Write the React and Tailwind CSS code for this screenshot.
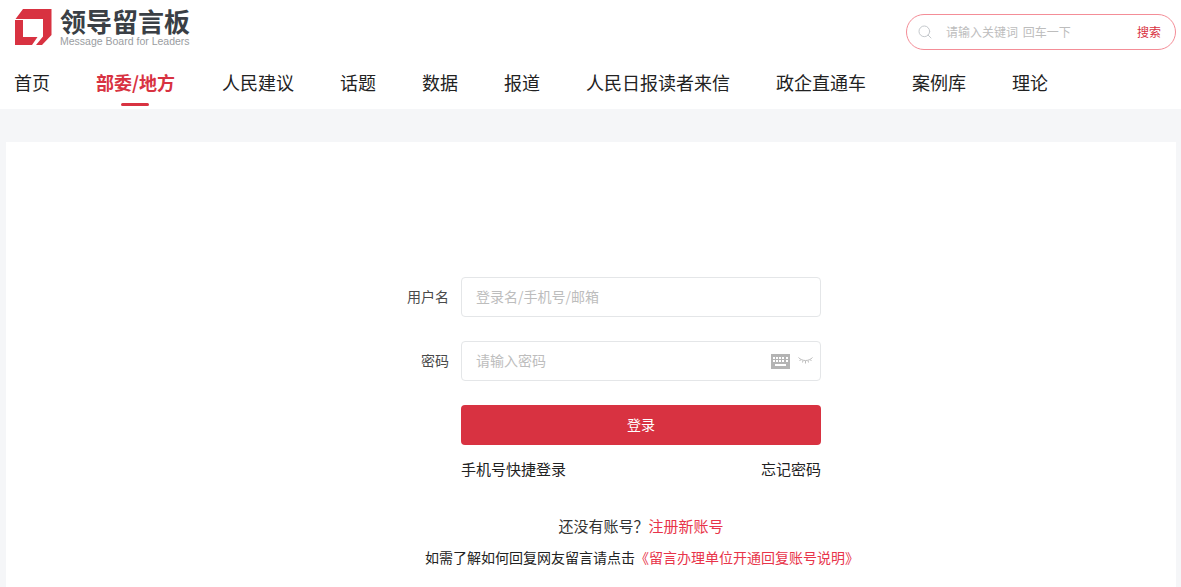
import { Search } from "lucide-react";

const navItems = ["首页", "部委/地方", "人民建议", "话题", "数据", "报道", "人民日报读者来信", "政企直通车", "案例库", "理论"];

const Logo = () => (
  <div className="flex items-start">
    <svg width="37" height="36" viewBox="0 0 37 36" className="ml-[15px] shrink-0">
      <path fill="#d83241" d="M8 0H36.5V26L27 36H21L28 27.5V10H0.5Z" />
      <path fill="#d83241" d="M0 11H8V28H22.5L17 36H0Z" />
    </svg>
    <div className="ml-[8px] -mt-[1px] flex flex-col">
      <div className="text-[26px] leading-[26px] font-bold text-[#3a3f45]">领导留言板</div>
      <div className="mt-[1px] text-[10.5px] leading-[12px] text-[#9a9da1] font-['Liberation_Sans',sans-serif]">
        Message Board for Leaders
      </div>
    </div>
  </div>
);

const SearchBox = () => (
  <div className="mr-[5px] mt-[5px] flex h-[36px] w-[270px] items-center rounded-[18px] border border-[#f48d97] pl-[10px] pr-[14px]">
    <Search size={16} strokeWidth={1.5} className="text-[#c4c8cc]" />
    <span className="ml-[13px] flex-1 text-[12px] text-[#bdbdbd] [word-spacing:2px]">请输入关键词 回车一下</span>
    <span className="text-[12px] text-[#d83241]">搜索</span>
  </div>
);

const KeyboardIcon = () => (
  <svg width="19" height="15" viewBox="0 0 19 15">
    <rect width="19" height="15" fill="#b4b4b4" />
    <g fill="#fff">
      <rect x="2" y="3" width="2" height="2" />
      <rect x="5" y="3" width="2" height="2" />
      <rect x="8" y="3" width="2" height="2" />
      <rect x="11" y="3" width="2" height="2" />
      <rect x="15" y="3" width="2" height="2" />
      <rect x="2" y="6" width="2" height="2" />
      <rect x="5" y="6" width="2" height="2" />
      <rect x="8" y="6" width="2" height="2" />
      <rect x="11" y="6" width="2" height="2" />
      <rect x="15" y="6" width="2" height="2" />
      <rect x="4" y="10" width="11" height="2" />
    </g>
  </svg>
);

const EyeClosedIcon = () => (
  <svg width="15" height="10" viewBox="0 0 15 10" fill="none" stroke="#bdbdbd" strokeWidth="1">
    <path d="M0.5 1.5C4 5.5 11 5.5 14.5 1.5" />
    <path d="M3 3.5L1.5 5M7.5 5V7.5M12 3.5L13.5 5M5 4.5L4.5 6.5M10 4.5L10.5 6.5" />
  </svg>
);

const Field = ({ label, placeholder, children }) => (
  <div className="flex items-center">
    <label className="w-[88px] pb-[2px] text-right text-[14px] text-[#4a4a4a]">{label}</label>
    <div className="ml-[12px] flex h-[40px] w-[360px] items-center rounded-[4px] border border-[#e4e6e8] pl-[14px] pr-[22px]">
      <span className="flex-1 pb-[2px] text-[14px] text-[#bdbdbd]">{placeholder}</span>
      {children}
    </div>
  </div>
);

export default function App() {
  return (
    <div className="min-h-[587px] overflow-hidden bg-[#f5f6f8] font-['Noto_Sans_CJK_SC','Liberation_Sans',sans-serif]">
      <header className="h-[109px] bg-white">
        <div className="flex h-[50px] items-start justify-between pt-[9px]">
          <Logo />
          <SearchBox />
        </div>
        <nav className="mt-[20px] flex gap-[46px] pl-[14px] text-[18px] leading-[24px] text-[#222]">
          {navItems.map((item) => (
            <a
              key={item}
              className={
                item === "部委/地方"
                  ? "relative h-[39px] pr-[1px] font-bold text-[#d83241]"
                  : "relative h-[39px]"
              }
            >
              {item}
              {item === "部委/地方" && (
                <span className="absolute bottom-[3px] left-[25px] h-[3px] w-[28px] rounded-[2px] bg-[#d83241]" />
              )}
            </a>
          ))}
        </nav>
      </header>

      <main className="ml-[6px] mr-[5px] mt-[33px] h-[445px] bg-white pt-[135px]">
        <form className="mx-auto flex w-[460px] flex-col gap-[24px]">
          <Field label="用户名" placeholder="登录名/手机号/邮箱" />
          <Field label="密码" placeholder="请输入密码">
            <div className="-mr-[15px] flex items-center gap-[8px]">
              <KeyboardIcon />
              <EyeClosedIcon />
            </div>
          </Field>
          <div className="ml-[100px] w-[360px]">
            <button type="button" className="h-[40px] w-full rounded-[4px] bg-[#d83241] pb-[2px] text-[14px] text-white">
              登录
            </button>
            <div className="mt-[13px] flex justify-between text-[15px] leading-[22px] text-[#222]">
              <a>手机号快捷登录</a>
              <a>忘记密码</a>
            </div>
            <p className="mt-[35px] text-center text-[15px] leading-[22px] text-[#333]">
              还没有账号？<a className="text-[#e8344a]">注册新账号</a>
            </p>
            <p className="-ml-[39px] -mr-[41px] mt-[10px] whitespace-nowrap text-center text-[14px] leading-[20px] text-[#222]">
              如需了解如何回复网友留言请点击<a className="text-[#e8344a]">《留言办理单位开通回复账号说明》</a>
            </p>
          </div>
        </form>
      </main>
    </div>
  );
}
